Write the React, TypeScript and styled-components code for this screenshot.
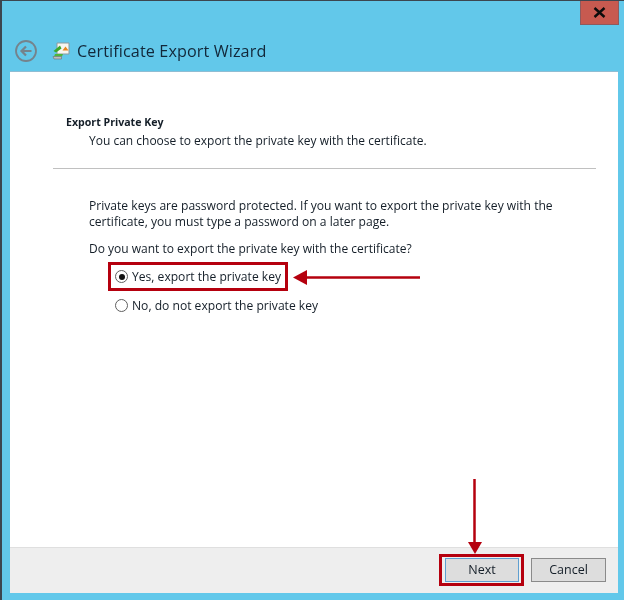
import React from 'react';
import styled, { createGlobalStyle } from 'styled-components';

const GlobalStyle = createGlobalStyle`
	html, body {
		margin: 0;
		padding: 0;
		background: #62c8ea;
	}
	* {
		box-sizing: border-box;
	}
`;

const Frame = styled.div`
	position: relative;
	width: 624px;
	height: 600px;
	display: flex;
	flex-direction: column;
	background: #62c8ea;
	border-top: 1px solid #3c4650;
	border-left: 2px solid #3c4650;
	padding: 0 6px 7px 8px;
	font-family: 'Open Sans', 'Liberation Sans', sans-serif;
	color: #141e28;
	filter: blur(0.5px);
`;

const CaptionRow = styled.div`
	display: flex;
	justify-content: flex-end;
	height: 24px;
`;

const CloseButton = styled.div`
	width: 39px;
	height: 24px;
	margin-right: -1px;
	display: flex;
	align-items: center;
	justify-content: center;
	background: #c75a50;
	border: 1px solid #8e5a5e;
	border-top: none;
`;

const TitleBar = styled.div`
	height: 47px;
	display: flex;
	align-items: center;
	padding-left: 5px;
	padding-top: 6px;
	border-bottom: 1px solid #8fbdd3;
`;

const IconSlot = styled.span`
	display: flex;
	margin-left: 15px;
`;

const WizardTitle = styled.span`
	font-size: 16.2px;
	letter-spacing: 0.1px;
	color: #12283a;
	margin-left: 7px;
`;

const Body = styled.div`
	flex: 1;
	display: flex;
	flex-direction: column;
	background: #ffffff;
`;

const Content = styled.div`
	flex: 1;
	padding: 43px 22px 0 43px;
`;

const SectionTitle = styled.div`
	font-size: 10.6px;
	font-weight: 700;
	line-height: 15px;
	margin-left: 13px;
`;

const SectionText = styled.div`
	font-size: 12px;
	line-height: 16px;
	margin: 3px 0 0 36px;
`;

const Divider = styled.div`
	height: 1px;
	background: #c0c0c0;
	margin-top: 19px;
`;

const Paragraph = styled.p`
	margin: 29px 0 0 36px;
	font-size: 12.1px;
	line-height: 16px;
`;

const Question = styled.p`
	margin: 11px 0 0 36px;
	font-size: 12px;
	line-height: 16px;
`;

const Choices = styled.div`
	display: flex;
	flex-direction: column;
	gap: 7px;
	margin: 5px 0 0 55px;
`;

const Choice = styled.div<{ $marked?: boolean }>`
	display: flex;
	align-items: center;
	gap: 4px;
	width: 180px;
	height: ${(p) => (p.$marked ? '29px' : '15px')};
	padding-left: ${(p) => (p.$marked ? '4px' : '7px')};
	border: ${(p) => (p.$marked ? '3px solid #b5000e' : 'none')};
	font-size: 12.1px;
	white-space: nowrap;
`;

const Radio = styled.span<{ $checked?: boolean }>`
	width: 13px;
	height: 13px;
	flex: none;
	border-radius: 50%;
	border: 1.5px solid #5f5f5f;
	background: #fff;
	display: flex;
	align-items: center;
	justify-content: center;
	&::after {
		content: '';
		display: ${(p) => (p.$checked ? 'block' : 'none')};
		width: 6px;
		height: 6px;
		border-radius: 50%;
		background: #111111;
	}
`;

const Footer = styled.div`
	height: 46px;
	display: flex;
	justify-content: flex-end;
	align-items: center;
	gap: 12px;
	padding: 0 12px 2px 0;
	background: #eeeeee;
	border-top: 1px solid #dfdfdf;
`;

const Button = styled.div<{ $primary?: boolean }>`
	width: ${(p) => (p.$primary ? '74px' : '75px')};
	height: 24px;
	display: flex;
	align-items: center;
	justify-content: center;
	font-size: 12.5px;
	background: #dddddd;
	border: 1px solid ${(p) => (p.$primary ? '#5f9fd0' : '#8a8a8a')};
`;

const NextHighlight = styled.div`
	padding: 1px 2px 1px 3px;
	margin-right: -5px;
	border: 3px solid #b5000e;
	display: flex;
`;

const ArrowLayer = styled.svg`
	position: absolute;
	left: -2px;
	top: -1px;
	width: 624px;
	height: 600px;
	pointer-events: none;
`;

const BackIcon = () => (
	<svg width="22" height="22" viewBox="0 0 22 22">
		<circle cx="11" cy="11" r="10" fill="none" stroke="#75838c" strokeWidth="1.8" />
		<path d="M16.500 11H7M11 6.500 6.500 11l4.500 4.500" fill="none" stroke="#75838c" strokeWidth="2.2" />
	</svg>
);

const CertIcon = () => (
	<svg width="18" height="18" viewBox="0 0 18 18">
		<path d="M5 1h12v11H5z" fill="#f6f6f0" stroke="#8d9a9c" strokeWidth="1" />
		<path d="M10.500 8.500l3-4 3 4z" fill="#e8861e" />
		<path d="M1.500 9 8 3.500l1.500 3-5.500 4z" fill="#3aa82c" />
		<path d="M3 12h8l-1 2.500H2z" fill="#4fb53a" />
		<path d="M1 14.500h8.500V17H2z" fill="#bdbdbd" stroke="#6f6f6f" strokeWidth="0.6" />
	</svg>
);

const App = () => {
	return (
		<>
			<GlobalStyle />
			<Frame>
				<CaptionRow>
					<CloseButton>
						<svg width="13" height="11" viewBox="0 0 13 11">
							<path d="M1.500 1l10 9M11.500 1l-10 9" stroke="#0c0c0c" strokeWidth="2.4" fill="none" />
						</svg>
					</CloseButton>
				</CaptionRow>
				<TitleBar>
					<BackIcon />
					<IconSlot>
						<CertIcon />
					</IconSlot>
					<WizardTitle>Certificate Export Wizard</WizardTitle>
				</TitleBar>
				<Body>
					<Content>
						<SectionTitle>Export Private Key</SectionTitle>
						<SectionText>You can choose to export the private key with the certificate.</SectionText>
						<Divider />
						<Paragraph>
							Private keys are password protected. If you want to export the private key with the
							<br />
							certificate, you must type a password on a later page.
						</Paragraph>
						<Question>Do you want to export the private key with the certificate?</Question>
						<Choices>
							<Choice $marked>
								<Radio $checked />
								Yes, export the private key
							</Choice>
							<Choice>
								<Radio />
								No, do not export the private key
							</Choice>
						</Choices>
					</Content>
					<Footer>
						<NextHighlight>
							<Button $primary>Next</Button>
						</NextHighlight>
						<Button>Cancel</Button>
					</Footer>
				</Body>
				<ArrowLayer viewBox="0 0 624 600">
					<path d="M420 277.500H305" stroke="#b5000e" strokeWidth="2.500" fill="none" />
					<path d="M293 277.500 307 270v15z" fill="#b5000e" />
					<path d="M474.500 479V542" stroke="#b5000e" strokeWidth="2.500" fill="none" />
					<path d="M468 542h14l-7 12z" fill="#b5000e" />
				</ArrowLayer>
			</Frame>
		</>
	);
};

export default App;
